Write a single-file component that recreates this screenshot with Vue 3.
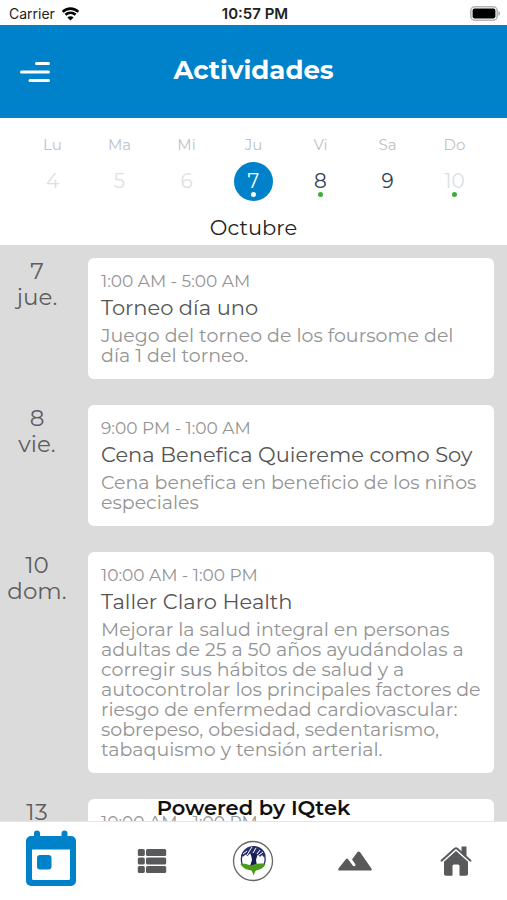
<template>
    <div class="screen">
        <div class="status-bar">
            <div class="carrier">
                <span>Carrier</span>
                <svg class="wifi" viewBox="0 0 18 14" aria-hidden="true">
                    <path d="M1.6 5.4a10.6 10.6 0 0 1 14.8 0" />
                    <path d="M4.2 8.2a6.9 6.9 0 0 1 9.6 0" />
                    <path class="wifi-core" d="M9 13.6 6.1 10.7a4.1 4.1 0 0 1 5.8 0z" />
                </svg>
            </div>
            <span class="clock">10:57 PM</span>
            <svg class="battery" viewBox="0 0 31 15" aria-hidden="true">
                <rect x="0.8" y="0.8" width="26.4" height="13.4" rx="4" fill="#fff" stroke="#b4b4b4" stroke-width="1.6" />
                <rect x="2.6" y="2.6" width="22.8" height="9.8" rx="1.8" fill="#000" />
                <path d="M28.4 5v5c1.1-.5 1.8-1.4 1.8-2.5S29.5 5.5 28.4 5z" fill="#b4b4b4" />
            </svg>
        </div>

        <header class="header">
            <button class="menu" type="button" aria-label="Menú">
                <svg viewBox="0 0 30 22" aria-hidden="true">
                    <path d="M16.5 2.5H28.5M1.5 11H28.5M10 19.5H28.5" />
                </svg>
            </button>
            <h1 class="title">Actividades</h1>
        </header>

        <section class="week">
            <div class="days">
                <div v-for="day in week" :key="day.number" class="day">
                    <span class="day-name">{{ day.name }}</span>
                    <button
                        type="button"
                        class="day-number"
                        :class="{ selected: day.number === selected, enabled: day.enabled }"
                        @click="selected = day.number"
                    >
                        {{ day.number }}
                        <span v-if="day.marked" class="dot"></span>
                    </button>
                </div>
            </div>
            <h2 class="month">Octubre</h2>
        </section>

        <main class="agenda">
            <div class="events">
                <article v-for="event in events" :key="event.day" class="event">
                    <div class="date">
                        <span>{{ event.day }}</span>
                        <span>{{ event.weekday }}</span>
                    </div>
                    <div class="card">
                        <p class="time">{{ event.time }}</p>
                        <h3 class="name">{{ event.name }}</h3>
                        <p class="description">{{ event.description }}</p>
                    </div>
                </article>
            </div>
            <p class="powered">Powered by IQtek</p>
        </main>

        <nav class="tabs">
            <button class="tab" type="button" aria-label="Actividades">
                <svg class="icon-calendar" viewBox="0 0 52 62" aria-hidden="true">
                    <path
                        fill-rule="evenodd"
                        d="M12 0.500a3 3 0 0 1 3 3V6h21.500V3.500a3 3 0 0 1 6 0V6H46a5 5 0 0 1 5 5v40a5 5 0 0 1-5 5H6a5 5 0 0 1-5-5V11a5 5 0 0 1 5-5h3V3.500a3 3 0 0 1 3-3zM7 19.500V48.500a1.500 1.500 0 0 0 1.500 1.500h35a1.500 1.500 0 0 0 1.500-1.500V19.500z"
                    />
                    <rect x="12" y="25" width="14.5" height="14.5" rx="3" />
                </svg>
            </button>
            <button class="tab" type="button" aria-label="Lista">
                <svg class="icon-list" viewBox="0 0 30 24" aria-hidden="true">
                    <g v-for="row in 3" :key="row">
                        <rect x="0.8" :y="(row - 1) * 8.5" width="7" height="7" rx="1.6" />
                        <rect x="9" :y="(row - 1) * 8.5" width="20.2" height="7" rx="1.6" />
                    </g>
                </svg>
            </button>
            <button class="tab" type="button" aria-label="Club">
                <svg class="icon-club" viewBox="0 0 42 42" aria-hidden="true">
                    <circle cx="21" cy="21" r="19.5" fill="#fff" stroke="#666" stroke-width="1.3" />
                    <path d="M10.300 24.500A14 14 0 0 1 13 10.500M32 24.500A14 14 0 0 0 30.500 11" fill="none" stroke="#26306b" stroke-width="1.3" />
                    <path d="M9 16c1.500-6 6.500-10 12.500-10S32 9.500 33.500 15l-2 2-1.500-2-2 2-2-2.500-1.500 3-2.500-2-2 1-2-3-2.500 2.500-2-1.500-2 2z" fill="#26306b" />
                    <path d="m11 14 4-3m0 4 3-5m3 3 3-5m1 6 3-4m-10 0 2-3m7 8 4-3" fill="none" stroke="#fff" stroke-width="1" />
                    <path d="m19 14 4-1 2 3-1 4 1 6h-7l2-6z" fill="#171d50" />
                    <path d="M8.500 24c3-.8 6.500-.3 10 1.500 4-1.800 10-2.500 15-1.500-1.500 3.500-4.800 5.800-8.800 6.300-1.500.5-2 2.200-3.200 5.200-.8-3-1.300-4.700-3-5.200-4.500-.7-8.500-2.800-10-6.300z" fill="#4a9a1c" />
                </svg>
            </button>
            <button class="tab" type="button" aria-label="Campo">
                <svg class="icon-field" viewBox="0 0 34 20" aria-hidden="true">
                    <path d="M1.500 19.500c-1.200 0-1.600-1-1-2L7.800 8.200c.7-.9 1.600-.9 2.300 0l4.600 6.300c.7.900 1.500 1 2.200.5.700-.6.700-1.300.1-2.200L14 8.500l5.500-7.400c.7-.9 1.800-.9 2.500 0L33.400 17.500c.7 1 .2 2-1 2z" />
                </svg>
            </button>
            <button class="tab" type="button" aria-label="Inicio">
                <svg class="icon-home" viewBox="0 0 32 30" aria-hidden="true">
                    <path d="M21.500 0.500h5v12l-5-4.500z" />
                    <path d="M4 15.500 16 4.700l12 10.800V28a1.800 1.800 0 0 1-1.800 1.800H19.500V20a1.500 1.500 0 0 0-1.500-1.500h-4a1.500 1.500 0 0 0-1.500 1.500v9.800H5.800A1.800 1.800 0 0 1 4 28z" />
                    <path class="roof-gap" d="M1.500 16.700 16 3.700l14.500 13" />
                    <path class="roof" d="M1.500 14.700 14.700 2.800q1.300-1.100 2.600 0l13.200 11.900" />
                </svg>
            </button>
        </nav>
    </div>
</template>

<script setup>
import { ref } from 'vue';

const selected = ref(7);

const week = [
    { name: 'Lu', number: 4 },
    { name: 'Ma', number: 5 },
    { name: 'Mi', number: 6 },
    { name: 'Ju', number: 7, enabled: true, marked: true },
    { name: 'Vi', number: 8, enabled: true, marked: true },
    { name: 'Sa', number: 9, enabled: true },
    { name: 'Do', number: 10, marked: true },
];

const events = [
    {
        day: 7,
        weekday: 'jue.',
        time: '1:00 AM - 5:00 AM',
        name: 'Torneo día uno',
        description: 'Juego del torneo de los foursome del día 1 del torneo.',
    },
    {
        day: 8,
        weekday: 'vie.',
        time: '9:00 PM - 1:00 AM',
        name: 'Cena Benefica Quiereme como Soy',
        description: 'Cena benefica en beneficio de los niños especiales',
    },
    {
        day: 10,
        weekday: 'dom.',
        time: '10:00 AM - 1:00 PM',
        name: 'Taller Claro Health',
        description: 'Mejorar la salud integral en personas adultas de 25 a 50 años ayudándolas a corregir sus hábitos de salud y a autocontrolar los principales factores de riesgo de enfermedad cardiovascular: sobrepeso, obesidad, sedentarismo, tabaquismo y tensión arterial.',
    },
    {
        day: 13,
        time: '10:00 AM - 1:00 PM',
    },
];
</script>

<style>
body {
    margin: 0;
}
</style>

<style scoped>
.screen {
    display: flex;
    flex-direction: column;
    height: 100vh;
    overflow: hidden;
    background: #fff;
    color: #222;
    font-family: Gotham, Montserrat, Inter, sans-serif;
}

h1, h2, h3, p {
    margin: 0;
    font-weight: 400;
}

button {
    padding: 0;
    border: 0;
    background: none;
    color: inherit;
    font: inherit;
    cursor: pointer;
}

svg {
    display: block;
}

.status-bar {
    display: grid;
    grid-template-columns: 1fr auto 1fr;
    align-items: center;
    height: 25px;
    padding: 2px 6px 0 9px;
    box-sizing: border-box;
    font-family: Inter, sans-serif;
    font-size: 14px;
    line-height: 20px;
    color: #222;
}

.carrier {
    display: flex;
    align-items: center;
    gap: 6px;
}

.wifi {
    width: 19px;
    height: 15px;
    fill: none;
    stroke: #000;
    stroke-width: 2.4;
}

.wifi .wifi-core {
    fill: #000;
    stroke: none;
}

.clock {
    font-size: 15px;
    font-weight: 600;
}

.battery {
    justify-self: end;
    width: 31px;
    height: 15px;
}

.header {
    display: grid;
    grid-template-columns: 1fr auto 1fr;
    align-items: center;
    height: 93px;
    padding: 0 20px;
    background: #0082ca;
    color: #fff;
}

.menu {
    justify-self: start;
}

.menu svg {
    width: 30px;
    height: 22px;
    fill: none;
    stroke: #fff;
    stroke-width: 3;
    stroke-linecap: round;
}

.title {
    padding-bottom: 4px;
    font-size: 26px;
    font-weight: 700;
    line-height: 32px;
}

.week {
    padding: 17px 19px 4px;
}

.days {
    display: grid;
    grid-template-columns: repeat(7, 1fr);
}

.day {
    display: flex;
    flex-direction: column;
    align-items: center;
    gap: 7px;
}

.day-name {
    font-size: 15px;
    line-height: 20px;
    color: #bcc3c9;
}

.day-number {
    position: relative;
    width: 39px;
    height: 39px;
    border-radius: 50%;
    font-size: 20px;
    line-height: 39px;
    color: #dce1e6;
}

.day-number.enabled {
    color: #2d4150;
}

.day-number.selected {
    background: #0082ca;
    color: #fff;
}

.dot {
    position: absolute;
    bottom: 4px;
    left: 17px;
    width: 5px;
    height: 5px;
    border-radius: 50%;
    background: #3eae3b;
}

.selected .dot {
    background: #fff;
}

.month {
    margin-top: 14px;
    font-size: 21px;
    line-height: 26px;
    text-align: center;
}

.agenda {
    position: relative;
    flex: 1;
    min-height: 0;
    background: #dbdbdb;
}

.events {
    display: flex;
    flex-direction: column;
    gap: 26px;
    height: 100%;
    padding: 13px 13px 0 0;
    box-sizing: border-box;
    overflow-y: auto;
    scrollbar-width: none;
}

.event {
    display: flex;
    flex-shrink: 0;
    gap: 14px;
}

.date {
    display: flex;
    flex-direction: column;
    flex-shrink: 0;
    width: 74px;
    font-size: 23px;
    line-height: 26px;
    text-align: center;
    color: #5e5e5e;
}

.card {
    flex: 1;
    padding: 13px 11px 13px 13px;
    border-radius: 6px;
    background: #fff;
}

.time {
    font-size: 17px;
    line-height: 20px;
    color: #949494;
}

.name {
    margin: 4px 0 5px;
    font-size: 21px;
    line-height: 26px;
    color: #555;
}

.description {
    font-size: 19px;
    line-height: 20px;
    color: #949494;
}

.powered {
    position: absolute;
    right: 0;
    bottom: 0;
    left: 0;
    font-size: 21px;
    font-weight: 600;
    line-height: 26px;
    text-align: center;
    color: #111;
}

.tabs {
    display: grid;
    grid-template-columns: repeat(5, 1fr);
    height: 79px;
    border-top: 1px solid #e6e6e6;
    box-sizing: border-box;
}

.tab {
    display: flex;
    align-items: center;
    justify-content: center;
    fill: #58595b;
}

.icon-calendar {
    width: 52px;
    height: 62px;
    fill: #0082ca;
}

.icon-list {
    width: 30px;
    height: 24px;
}

.icon-club {
    width: 42px;
    height: 42px;
}

.icon-field {
    width: 34px;
    height: 20px;
}

.icon-home {
    width: 32px;
    height: 30px;
}

.roof {
    fill: none;
    stroke: #58595b;
    stroke-width: 2;
    stroke-linecap: round;
}

.roof-gap {
    fill: none;
    stroke: #fff;
    stroke-width: 1.6;
}
</style>
